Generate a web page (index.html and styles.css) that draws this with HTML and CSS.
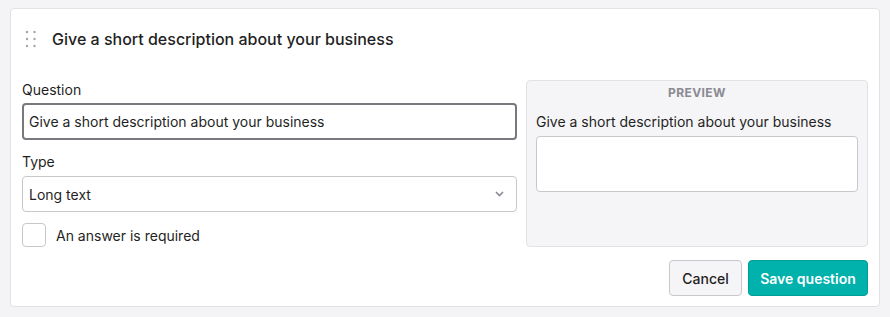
FILE: index.html
```html
<!DOCTYPE html>
<html lang="en">
<head>
    <meta charset="UTF-8">
    <meta name="viewport" content="width=device-width, initial-scale=1.0">
    <title>Edit question</title>
    <link rel="stylesheet" href="styles.css">
</head>
<body>
    <div class="card">
        <div class="card-header">
            <svg class="handle" width="12" height="18" viewBox="0 0 12 18">
                <circle cx="2" cy="2" r="1.2"/><circle cx="9.5" cy="2" r="1.2"/>
                <circle cx="2" cy="9" r="1.2"/><circle cx="9.5" cy="9" r="1.2"/>
                <circle cx="2" cy="16" r="1.2"/><circle cx="9.5" cy="16" r="1.2"/>
            </svg>
            <h2 class="title">Give a short description about your business</h2>
        </div>

        <div class="body">
            <div class="fields">
                <label class="label" for="question">Question</label>
                <input class="input focused" id="question" type="text" value="Give a short description about your business">

                <label class="label type-label" for="type">Type</label>
                <div class="select">
                    <span>Long text</span>
                    <svg class="chevron" width="9" height="6" viewBox="0 0 9 6">
                        <path d="M1 1l3.5 3.5L8 1" fill="none" stroke="#8a8a92" stroke-width="1.6"/>
                    </svg>
                </div>

                <label class="check-row">
                    <span class="checkbox"></span>
                    <span>An answer is required</span>
                </label>
            </div>

            <div class="preview">
                <div class="preview-title">PREVIEW</div>
                <div class="preview-label">Give a short description about your business</div>
                <div class="preview-box"></div>
            </div>
        </div>

        <div class="actions">
            <button class="btn btn-cancel" type="button">Cancel</button>
            <button class="btn btn-save" type="button">Save question</button>
        </div>
    </div>
</body>
</html>
```

FILE: styles.css
```css
/* Pagina */
body {
    margin: 0;
    padding: 8px 10px 10px 10px;
    background-color: #f4f4f6;
    font-family: Inter, "Noto Sans", sans-serif;
    font-size: 14px;
    color: #1f1f24;
}

/* Cartao principal */
.card {
    background-color: #ffffff;
    border: 1px solid #e2e2e6;
    border-radius: 4px;
    padding: 0 11px 10px 11px;
}

.card-header {
    display: flex;
    align-items: center;
    padding: 20px 0 31px 3px;
}

.handle {
    fill: #a3a3ab;
    margin-right: 15px;
}

.title {
    margin: 0;
    font-size: 16px;
    font-weight: 500;
    line-height: 20px;
}

/* Duas colunas: campos e preview */
.body {
    display: grid;
    grid-template-columns: 1fr 342px;
    gap: 9px;
}

.label {
    display: block;
    line-height: 20px;
    margin-bottom: 3px;
}

.type-label {
    margin-top: 12px;
    margin-bottom: 4px;
}

.input {
    box-sizing: border-box;
    width: 100%;
    height: 37px;
    padding: 0 6px;
    border: 1px solid #c8c8cc;
    border-radius: 4px;
    font-family: inherit;
    font-size: 14px;
    color: #1f1f24;
    outline: none;
}

.input.focused {
    border: 2px solid #78787f;
    padding: 0 5px;
}

.select {
    box-sizing: border-box;
    display: flex;
    align-items: center;
    justify-content: space-between;
    height: 36px;
    padding: 0 12px 0 6px;
    border: 1px solid #c8c8cc;
    border-radius: 4px;
}

.check-row {
    display: flex;
    align-items: center;
    gap: 10px;
    margin-top: 11px;
}

.checkbox {
    box-sizing: border-box;
    width: 24px;
    height: 24px;
    border: 1px solid #c8c8cc;
    border-radius: 4px;
}

/* Preview */
.preview {
    box-sizing: border-box;
    height: 167px;
    background-color: #f5f5f7;
    border: 1px solid #e2e2e6;
    border-radius: 4px;
    padding: 4px 9px 0 9px;
}

.preview-title {
    text-align: center;
    font-size: 12px;
    font-weight: 700;
    letter-spacing: 0.4px;
    color: #8a8a92;
    line-height: 16px;
}

.preview-label {
    margin-top: 11px;
    line-height: 20px;
}

.preview-box {
    margin-top: 4px;
    height: 56px;
    background-color: #ffffff;
    border: 1px solid #c8c8cc;
    border-radius: 4px;
    box-sizing: border-box;
}

/* Botoes */
.actions {
    display: flex;
    justify-content: flex-end;
    gap: 6px;
    margin-top: 13px;
}

.btn {
    height: 36px;
    border-radius: 4px;
    font-family: inherit;
    font-size: 14px;
    padding: 0;
    white-space: nowrap;
    cursor: pointer;
}

.btn-cancel {
    width: 73px;
    background-color: #f5f5f7;
    border: 1px solid #c8c8cc;
    color: #1f1f24;
    font-weight: 500;
}

.btn-save {
    width: 120px;
    background-color: #00b1ac;
    border: 1px solid #009e99;
    color: #ffffff;
    font-weight: 600;
}
```
